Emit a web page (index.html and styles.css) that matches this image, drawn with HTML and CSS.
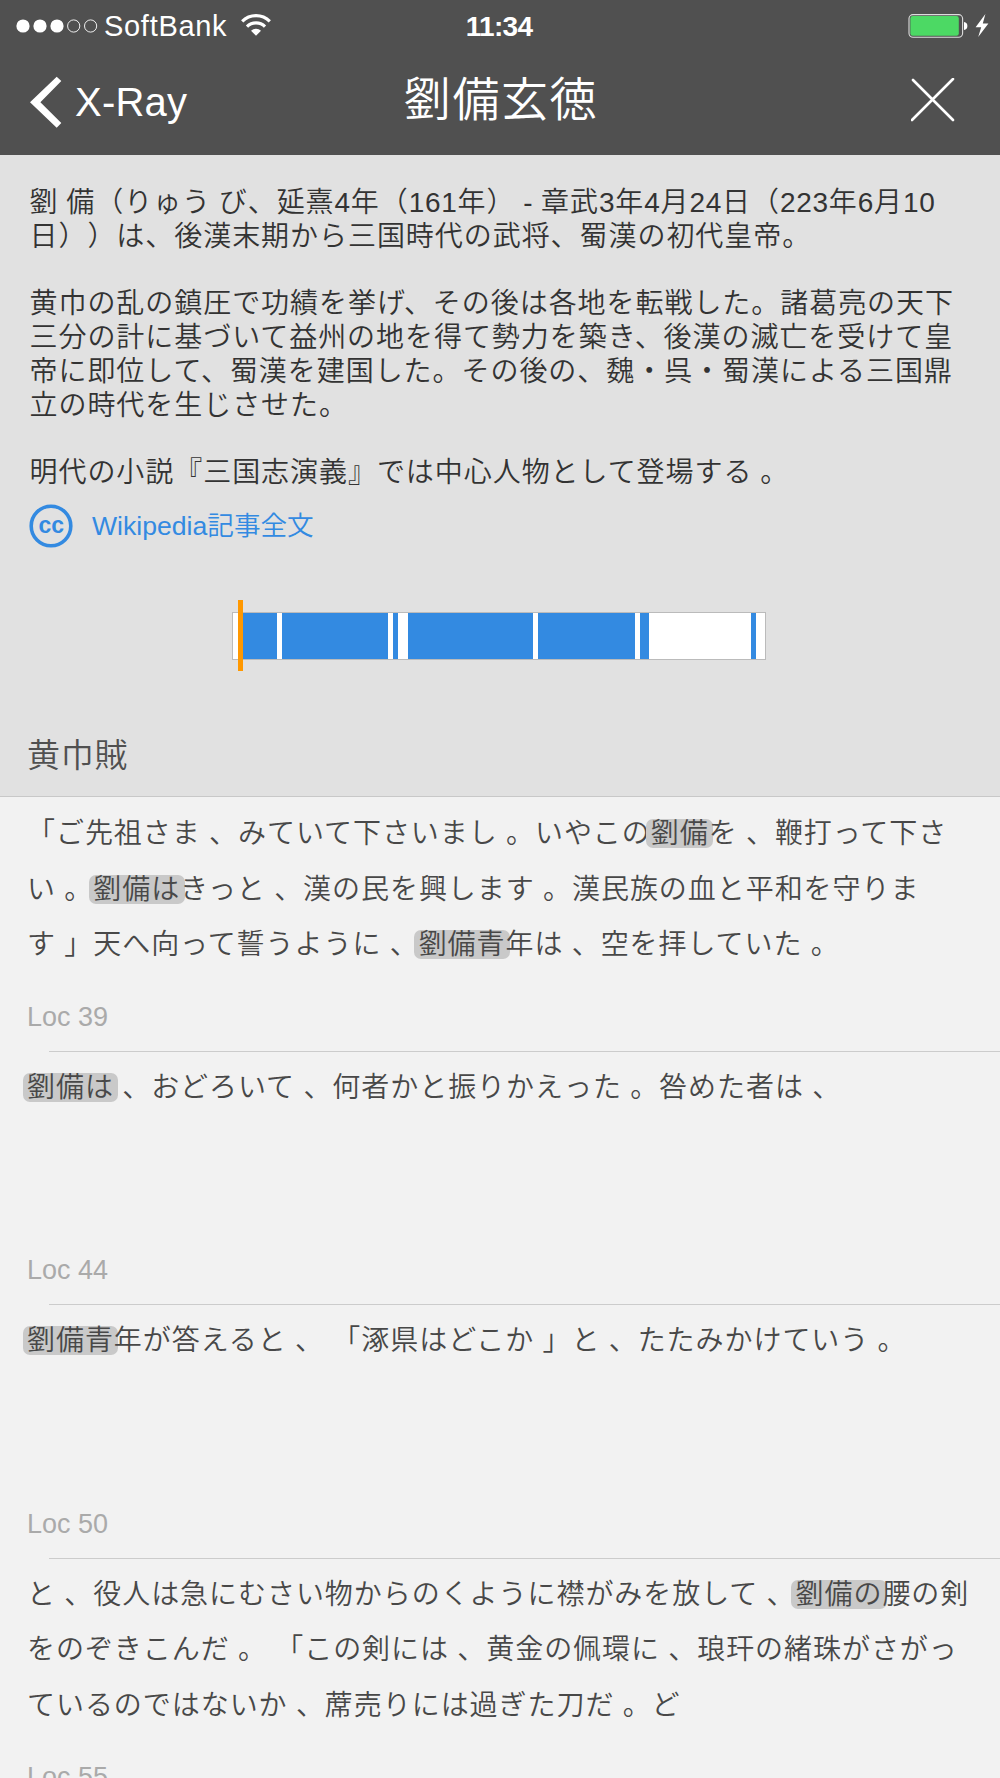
FILE: index.html
```
<!DOCTYPE html>
<html lang="ja">
<head>
    <meta charset="UTF-8">
    <title>X-Ray - 劉備玄徳</title>
    <link rel="stylesheet" href="styles.css">
</head>
<body>
    <header class="header">
        <div class="status-bar">
            <div class="status-left">
                <svg class="signal" width="82" height="14" viewBox="0 0 82 14">
                    <g fill="#fff">
                        <circle cx="7" cy="7" r="6.6"/>
                        <circle cx="24" cy="7" r="6.6"/>
                        <circle cx="41" cy="7" r="6.6"/>
                    </g>
                    <g fill="none" stroke="#fff" stroke-width="0.9">
                        <circle cx="57.7" cy="7" r="6.1"/>
                        <circle cx="74.6" cy="7" r="6.1"/>
                    </g>
                </svg>
                <span class="carrier">SoftBank</span>
                <svg class="wifi" width="30" height="22" viewBox="0 0 30 22">
                    <g fill="none" stroke="#fff" stroke-width="3.2">
                        <path d="M1.2 7.4 A19.5 19.5 0 0 1 28.8 7.4"/>
                        <path d="M6 12.6 A12.8 12.8 0 0 1 24 12.6"/>
                    </g>
                    <path fill="#fff" d="M15 21.8 L10 16.8 A7.2 7.2 0 0 1 20 16.8 Z"/>
                </svg>
            </div>
            <div class="clock">11:34</div>
            <div class="status-right">
                <svg width="82" height="26" viewBox="0 0 82 26">
                    <rect x="1" y="1.6" width="53.6" height="22.6" rx="4" fill="none" stroke="#ddd" stroke-width="1.1"/>
                    <rect x="2.4" y="3" width="48.4" height="19.8" rx="2.4" fill="#4cd964"/>
                    <path fill="#fff" d="M56 9 Q59.4 9.6 59.4 13 Q59.4 16.4 56 17 Z"/>
                    <path fill="#fff" d="M77.4 1 L67.6 14.2 L73.2 14.2 L70.2 24 L80.4 10.4 L74.8 10.4 Z"/>
                </svg>
            </div>
        </div>
        <nav class="nav-bar">
            <a class="back">
                <svg width="32" height="52" viewBox="0 0 32 52">
                    <path fill="#fff" d="M26.7 0.7 L0 26.3 L26.7 51.7 L31.3 47 L10.4 26.3 L31.3 5 Z"/>
                </svg>
                <span>X-Ray</span>
            </a>
            <h1>劉備玄徳</h1>
            <a class="close">
                <svg width="44" height="44" viewBox="0 0 44 44">
                    <path d="M2 2 L42 42 M42 1 L1 42" stroke="#fff" stroke-width="2.6" stroke-linecap="round"/>
                </svg>
            </a>
        </nav>
    </header>

    <section class="summary">
        <div class="description">
            <p>劉 備（りゅう び、延熹<span class="num">4</span>年（<span class="num">161</span>年） <span class="num">-</span> 章武<span class="num">3</span>年<span class="num">4</span>月<span class="num">24</span>日（<span class="num">223</span>年<span class="num">6</span>月<span class="num">10</span><br>
            日））は、後漢末期から三国時代の武将、蜀漢の初代皇帝。</p>
            <p>黄巾の乱の鎮圧で功績を挙げ、その後は各地を転戦した。諸葛亮の天下<br>
            三分の計に基づいて益州の地を得て勢力を築き、後漢の滅亡を受けて皇<br>
            帝に即位して、蜀漢を建国した。その後の、魏・呉・蜀漢による三国鼎<br>
            立の時代を生じさせた。</p>
            <p>明代の小説『三国志演義』では中心人物として登場する 。</p>
        </div>
        <a class="wiki">
            <svg width="44" height="44" viewBox="0 0 44 44">
                <circle cx="22" cy="22" r="19.8" fill="none" stroke="#338ae1" stroke-width="3.6"/>
                <text x="22.2" y="28.6" text-anchor="middle" class="cc">cc</text>
            </svg>
            <span>Wikipedia記事全文</span>
        </a>

        <div class="timeline">
            <div class="track">
                <i class="gap" style="width: 10px"></i>
                <i class="hit" style="width: 34px"></i>
                <i class="gap" style="width: 5px"></i>
                <i class="hit" style="width: 106px"></i>
                <i class="gap" style="width: 5px"></i>
                <i class="hit" style="width: 5px"></i>
                <i class="gap" style="width: 9.5px"></i>
                <i class="hit" style="width: 125.5px"></i>
                <i class="gap" style="width: 5px"></i>
                <i class="hit" style="width: 96.5px"></i>
                <i class="gap" style="width: 5px"></i>
                <i class="hit" style="width: 9.5px"></i>
                <i class="gap" style="width: 101.5px"></i>
                <i class="hit" style="width: 5px"></i>
            </div>
            <div class="marker"></div>
        </div>

        <h2>黄巾賊</h2>
    </section>

    <ul class="passages">
        <li>
            <p>「ご先祖さま 、みていて下さいまし 。いやこの<mark>劉備</mark>を 、鞭打って下さ<br>
            い 。<mark>劉備は</mark>きっと 、漢の民を興します 。漢民族の血と平和を守りま<br>
            す 」天へ向って誓うように 、<mark>劉備青</mark>年は 、空を拝していた 。</p>
            <div class="loc">Loc 39</div>
        </li>
        <li>
            <p><mark>劉備は</mark> 、おどろいて 、何者かと振りかえった 。咎めた者は 、</p>
            <div class="loc">Loc 44</div>
        </li>
        <li>
            <p><mark>劉備青</mark>年が答えると 、 「涿県はどこか 」と 、たたみかけていう 。</p>
            <div class="loc">Loc 50</div>
        </li>
        <li>
            <p>と 、役人は急にむさい物からのくように襟がみを放して 、<mark>劉備の</mark>腰の剣<br>
            をのぞきこんだ 。 「この剣には 、黄金の佩環に 、琅玕の緒珠がさがっ<br>
            ているのではないか 、蓆売りには過ぎた刀だ 。ど</p>
            <div class="loc">Loc 55</div>
        </li>
    </ul>
</body>
</html>
```
FILE: styles.css
```
* {
    box-sizing: border-box;
    margin: 0;
    padding: 0;
}

body {
    width: 1000px;
    height: 1778px;
    overflow: hidden;
    font-family: "Liberation Sans", "Noto Sans CJK JP", sans-serif;
    font-weight: 350;
    text-spacing-trim: space-all;
    background-color: #f2f2f2;
    display: flex;
    flex-direction: column;
}

svg {
    display: block;
    flex: none;
}

/* Header */
.header {
    height: 155px;
    flex: none;
    background-color: #505050;
    color: #fff;
}

.status-bar {
    height: 50px;
    padding: 0 10px 0 16px;
    display: grid;
    grid-template-columns: 1fr auto 1fr;
    align-items: center;
}

.status-left {
    display: flex;
    align-items: center;
}

.carrier {
    margin-left: 6px;
    padding-top: 1px;
    font-size: 29px;
    line-height: 50px;
    letter-spacing: 0.7px;
}

.wifi {
    margin-left: 14px;
    margin-bottom: 2px;
}

.clock {
    font-size: 28px;
    font-weight: bold;
    letter-spacing: -0.7px;
    padding: 2px 8px 0 0;
}

.status-right {
    display: flex;
    justify-content: flex-end;
}

.nav-bar {
    height: 105px;
    padding: 0 45px 0 30px;
    display: grid;
    grid-template-columns: 1fr auto 1fr;
    align-items: start;
}

.back {
    display: flex;
    align-items: center;
    padding-top: 26px;
    font-size: 40px;
}

.back span {
    margin-left: 13px;
    padding-top: 1px;
    letter-spacing: 0.2px;
}

h1 {
    font-size: 47px;
    font-weight: 350;
    letter-spacing: 1.6px;
    line-height: 100px;
    padding-left: 17px;
}

.close {
    justify-self: end;
    padding-top: 28px;
}

/* Character summary */
.summary {
    height: 642px;
    flex: none;
    background-color: #e1e1e1;
    border-bottom: 1px solid #c8c8c8;
}

.description {
    padding: 31px 0 0 29.5px;
    font-size: 28px;
    letter-spacing: 0.95px;
    word-spacing: -0.95px;
    line-height: 33.75px;
    white-space: nowrap;
    color: #333;
}

.description p + p {
    margin-top: 33.75px;
}

.num {
    letter-spacing: 0.7px;
}

.wiki {
    display: flex;
    align-items: center;
    margin: 14px 0 0 29px;
    font-size: 26.6px;
    color: #338ae1;
}

.wiki span {
    margin: -5px 0 0 19px;
}

.cc {
    font-size: 23px;
    font-weight: bold;
    fill: #338ae1;
}

/* Where the character appears in the book */
.timeline {
    position: relative;
    width: 534px;
    margin: 64px 0 0 232px;
}

.track {
    height: 48px;
    display: flex;
    background-color: #fff;
    border: 1px solid #bbb;
}

.hit {
    flex: none;
    background-color: #338ae1;
}

.gap {
    flex: none;
}

.marker {
    position: absolute;
    left: 6px;
    top: -12px;
    width: 5px;
    height: 71px;
    background-color: #ff9800;
}

h2 {
    margin: 72px 0 0 27px;
    font-size: 33px;
    font-weight: 350;
    letter-spacing: 0.8px;
    line-height: 48px;
    color: #505050;
}

/* Passages */
.passages {
    list-style: none;
}

.passages li {
    height: 253.6px;
    display: flex;
    flex-direction: column;
    justify-content: space-between;
    padding: 9px 0 19px 27px;
}

/* separator starts a little right of the text */
.passages li + li {
    background: linear-gradient(#ccc, #ccc) 49px 0 / 100% 1px no-repeat;
}

.passages p {
    font-size: 28px;
    letter-spacing: 0.95px;
    word-spacing: -0.4px;
    line-height: 55.6px;
    white-space: nowrap;
    color: #484848;
}

mark {
    display: inline-block;
    margin: 0 -4.5px;
    padding: 1px 4.5px 0;
    line-height: 28px;
    border-radius: 7px;
    background-color: #c9c9c9;
    color: inherit;
}

.loc {
    font-size: 27px;
    line-height: 30px;
    color: #aaa;
}
```
